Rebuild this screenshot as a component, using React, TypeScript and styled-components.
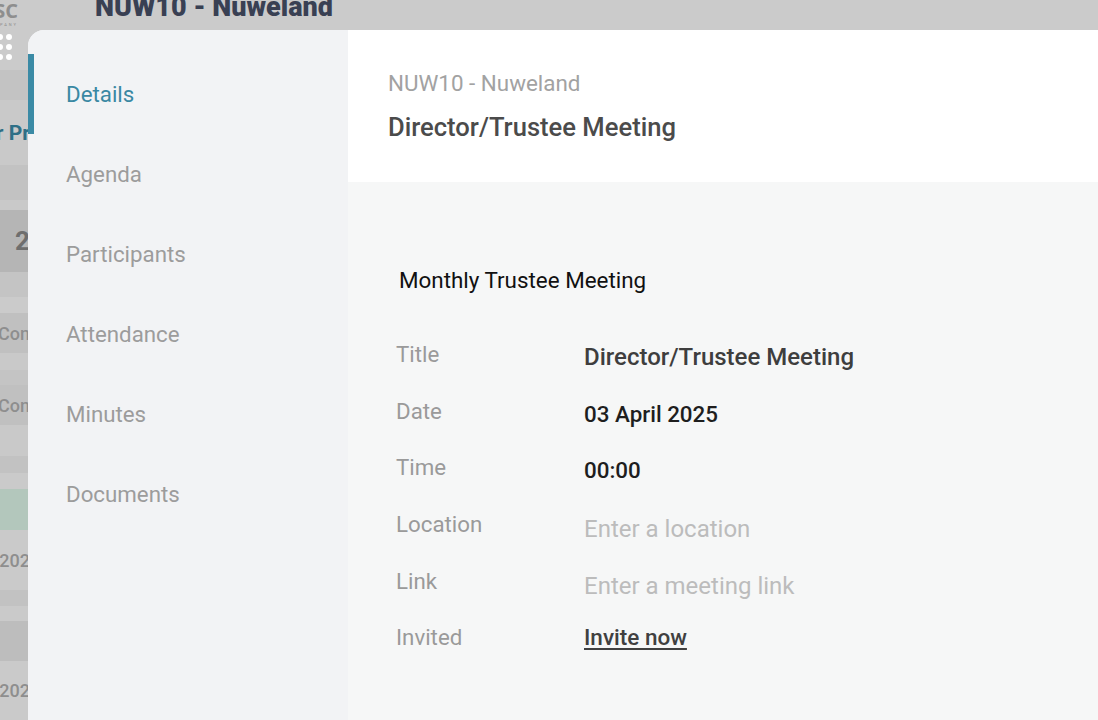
import React from "react";
import styled, { createGlobalStyle } from "styled-components";

const GlobalStyle = createGlobalStyle`
* { box-sizing: border-box; }
html, body { margin: 0; padding: 0; height: 100%; }
body {
  font-family: Roboto, "Liberation Sans", sans-serif;
  background: #cbcbcb;
  overflow: hidden;
}
`;

type Band = { h: number; bg: string; text?: string; tone?: "blue" | "big" | "soft" };

const bands: Band[] = [
  { h: 30, bg: "#c3c3c3" },
  { h: 65, bg: "#c9c9c9", text: "r Pr", tone: "blue" },
  { h: 35, bg: "#c2c2c2" },
  { h: 10, bg: "#c9c9c9" },
  { h: 62, bg: "#b5b5b5", text: "2", tone: "big" },
  { h: 25, bg: "#c4c4c4" },
  { h: 16, bg: "#cbcbcb" },
  { h: 40, bg: "#c0c0c0", text: "Con", tone: "soft" },
  { h: 17, bg: "#c9c9c9" },
  { h: 15, bg: "#c4c4c4" },
  { h: 40, bg: "#c0c0c0", text: "Con", tone: "soft" },
  { h: 31, bg: "#c9c9c9" },
  { h: 17, bg: "#c2c2c2" },
  { h: 16, bg: "#cacaca" },
  { h: 41, bg: "#b3c7bc" },
  { h: 60, bg: "#cacaca", text: "202", tone: "soft" },
  { h: 16, bg: "#c2c2c2" },
  { h: 15, bg: "#cacaca" },
  { h: 40, bg: "#bdbdbd" },
  { h: 59, bg: "#cacaca", text: "202", tone: "soft" },
];

const navItems = ["Details", "Agenda", "Participants", "Attendance", "Minutes", "Documents"];

type Field = { label: string; value: string; kind: "strong" | "dark" | "placeholder" | "link" };

const fields: Field[] = [
  { label: "Title", value: "Director/Trustee Meeting", kind: "strong" },
  { label: "Date", value: "03 April 2025", kind: "dark" },
  { label: "Time", value: "00:00", kind: "dark" },
  { label: "Location", value: "Enter a location", kind: "placeholder" },
  { label: "Link", value: "Enter a meeting link", kind: "placeholder" },
  { label: "Invited", value: "Invite now", kind: "link" },
];

export default function App() {
  return (
    <>
      <GlobalStyle />
      <Backdrop>
        <TopBar>
          <LogoBlock>
            <LogoText>BSC</LogoText>
            <LogoSub>COMPANY</LogoSub>
          </LogoBlock>
          <AppTitle>NUW10 - Nuweland</AppTitle>
        </TopBar>
        <DotsRow>
          <svg width="14" height="30" viewBox="0 0 14 30">
            {[0, 10, 20].map((y) =>
              [0, 9].map((x) => <circle key={`${x}-${y}`} cx={x} cy={y + 6} r="3" fill="#ffffff" />)
            )}
          </svg>
        </DotsRow>
        <BandList>
          {bands.map((b, i) => (
            <BandRow key={i} $h={b.h} $bg={b.bg}>
              {b.text && <BandText $tone={b.tone}>{b.text}</BandText>}
            </BandRow>
          ))}
        </BandList>
      </Backdrop>

      <Drawer>
        <SideNav>
          {navItems.map((item, i) => (
            <NavItem key={item} $active={i === 0}>
              {item}
            </NavItem>
          ))}
        </SideNav>
        <Main>
          <Header>
            <Crumb>NUW10 - Nuweland</Crumb>
            <HeaderTitle>Director/Trustee Meeting</HeaderTitle>
          </Header>
          <Body>
            <Subtitle>Monthly Trustee Meeting</Subtitle>
            <FieldList>
              {fields.map((f) => (
                <FieldRow key={f.label}>
                  <FieldLabel>{f.label}</FieldLabel>
                  <FieldValue $kind={f.kind}>{f.value}</FieldValue>
                </FieldRow>
              ))}
            </FieldList>
          </Body>
        </Main>
      </Drawer>
    </>
  );
}

const Backdrop = styled.div`
display: flex;
flex-direction: column;
height: 100vh;
background: #cbcbcb;
overflow: hidden;
`;

const TopBar = styled.div`
height: 30px;
display: flex;
align-items: flex-end;
gap: 77px;
overflow: hidden;
`;

const LogoBlock = styled.div`
display: flex;
flex-direction: column;
margin-left: -22px;
width: 40px;
color: #8e8e8e;
`;

const LogoText = styled.div`
font-family: "Open Sans", sans-serif;
font-weight: 700;
font-size: 20px;
line-height: 18px;
margin-top: -8px;
text-align: right;
`;

const LogoSub = styled.div`
font-size: 4px;
letter-spacing: 2px;
text-align: right;
line-height: 10px;
`;

const AppTitle = styled.div`
font-family: Roboto, sans-serif;
font-weight: 900;
font-size: 27px;
color: #394053;
line-height: 28px;
margin-bottom: 9px;
`;

const DotsRow = styled.div`
height: 40px;
display: flex;
align-items: flex-start;
padding-top: 1px;
svg { display: block; }
`;

const BandList = styled.div`
display: flex;
flex-direction: column;
width: 40px;
`;

const BandRow = styled.div<{ $h: number; $bg: string }>`
height: ${(p) => p.$h}px;
background: ${(p) => p.$bg};
display: flex;
align-items: center;
justify-content: flex-end;
overflow: hidden;
white-space: nowrap;
padding-right: 10px;
`;

const BandText = styled.span<{ $tone?: "blue" | "big" | "soft" }>`
font-weight: ${(p) => (p.$tone === "soft" ? 500 : 700)};
font-size: ${(p) => (p.$tone === "big" ? "26px" : p.$tone === "blue" ? "21px" : "18px")};
color: ${(p) => (p.$tone === "blue" ? "#2e6f86" : p.$tone === "big" ? "#6e6e6e" : "#8e8e8e")};
`;

const Drawer = styled.div`
position: fixed;
top: 30px;
left: 28px;
right: 0;
bottom: 0;
display: grid;
grid-template-columns: 320px 1fr;
border-top-left-radius: 16px;
overflow: hidden;
background: #f2f3f5;
`;

const SideNav = styled.nav`
display: flex;
flex-direction: column;
padding-top: 24px;
background: #f2f3f5;
`;

const NavItem = styled.div<{ $active?: boolean }>`
height: 80px;
display: flex;
align-items: center;
padding-left: 32px;
border-left: 6px solid ${(p) => (p.$active ? "#3b8aa5" : "transparent")};
font-size: 22.3px;
color: ${(p) => (p.$active ? "#3a88a3" : "#9c9c9c")};
`;

const Main = styled.div`
display: flex;
flex-direction: column;
background: #f6f7f7;
`;

const Header = styled.header`
height: 152px;
background: #ffffff;
padding: 40px 40px 0;
display: flex;
flex-direction: column;
`;

const Crumb = styled.div`
font-size: 22.4px;
line-height: 26px;
color: #a2a2a2;
`;

const HeaderTitle = styled.div`
margin-top: 16px;
font-size: 25.6px;
line-height: 30px;
font-weight: 500;
color: #4b4b4b;
`;

const Body = styled.div`
padding: 85px 48px 0;
`;

const Subtitle = styled.div`
font-size: 22.4px;
line-height: 26px;
color: #111111;
padding-left: 3px;
margin-bottom: 48px;
`;

const FieldList = styled.div`
display: flex;
flex-direction: column;
`;

const FieldRow = styled.div`
display: grid;
grid-template-columns: 188px 1fr;
height: 56.7px;
`;

const FieldLabel = styled.div`
font-size: 22.3px;
line-height: 26px;
color: #9a9a9a;
`;

const valueColor = {
  strong: "#3e3e3e",
  dark: "#1e1e1e",
  placeholder: "#bcbcbc",
  link: "#404040",
};

const valueSize = {
  strong: 24,
  dark: 22.4,
  placeholder: 24,
  link: 22.5,
};

const valueOffset = {
  strong: 3,
  dark: 3,
  placeholder: 5,
  link: -2,
};

const FieldValue = styled.div<{ $kind: Field["kind"] }>`
font-size: ${(p) => valueSize[p.$kind]}px;
line-height: 26px;
padding-top: ${(p) => valueOffset[p.$kind]}px;
font-weight: ${(p) => (p.$kind === "placeholder" ? 400 : 500)};
color: ${(p) => valueColor[p.$kind]};
text-decoration: ${(p) => (p.$kind === "link" ? "underline" : "none")};
text-underline-offset: 3px;
text-decoration-thickness: 2px;
`;
